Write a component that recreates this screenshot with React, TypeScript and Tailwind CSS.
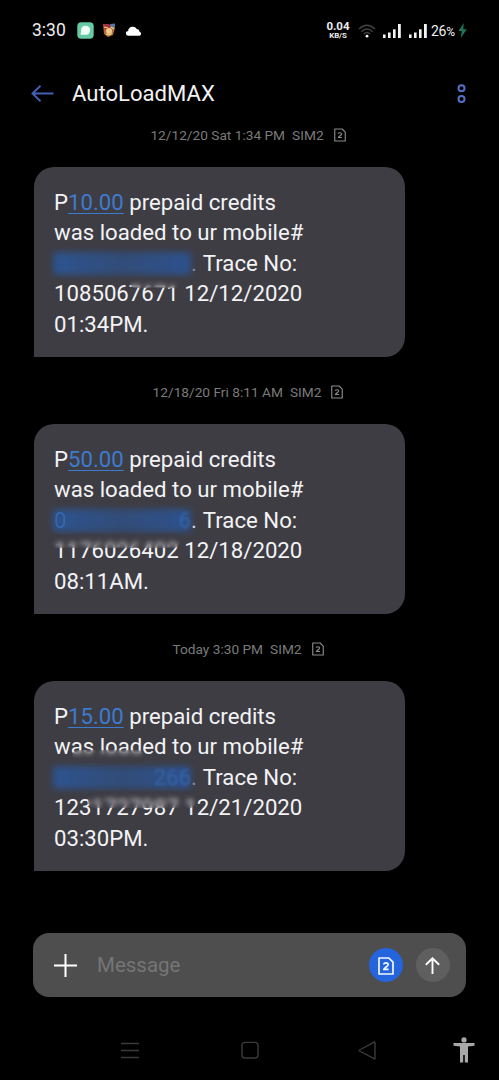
import React from "react";

type Smudge = { id: string; className: string };

type Message = {
  stamp: string;
  amount: string;
  lead: string;
  tail: string;
  dotClass: string;
  trace: string;
  date: string;
  time: string;
  smudges: Smudge[];
};

const messages: Message[] = [
  {
    stamp: "12/12/20 Sat 1:34 PM",
    amount: "10.00",
    lead: "",
    tail: "",
    dotClass: "text-[#96969c]",
    trace: "1085067671",
    date: "12/12/2020",
    time: "01:34PM.",
    smudges: [{ id: "a", className: "left-[96px] top-[111px] h-[10px] w-[50px]" }],
  },
  {
    stamp: "12/18/20 Fri 8:11 AM",
    amount: "50.00",
    lead: "0",
    tail: "6",
    dotClass: "text-[#f3f3f5]",
    trace: "1176026402",
    date: "12/18/2020",
    time: "08:11AM.",
    smudges: [{ id: "a", className: "left-[14px] top-[110px] h-[14px] w-[132px]" }],
  },
  {
    stamp: "Today 3:30 PM",
    amount: "15.00",
    lead: "",
    tail: "266",
    dotClass: "text-[#96969c]",
    trace: "1231727987",
    date: "12/21/2020",
    time: "03:30PM.",
    smudges: [
      { id: "a", className: "left-[38px] top-[69px] h-[13px] w-[72px]" },
      { id: "b", className: "left-[54px] top-[110px] h-[17px] w-[108px]" },
    ],
  },
];

function SimIcon({ className, stroke }: { className: string; stroke: number }) {
  return (
    <svg className={className} viewBox="0 0 16 18" fill="none" stroke="currentColor" strokeLinejoin="round">
      <path d="M1 1h9.8L15 5.2V17H1z" strokeWidth={stroke} />
      <path d="M5.8 7.4C5.8 5.4 10.2 5.4 10.2 7.6c0 1.5-3.2 2.8-4.4 4.8h4.8" strokeWidth={stroke} />
    </svg>
  );
}

function Signal() {
  return (
    <svg className="h-[14px] w-[18px]" viewBox="0 0 18 14" fill="#f4f4f4">
      <rect x="0" y="10.5" width="2.6" height="3.5" />
      <rect x="5" y="8.5" width="2.6" height="5.5" />
      <rect x="10" y="5.3" width="2.6" height="8.7" />
      <rect x="15" y="0" width="2.8" height="14" />
    </svg>
  );
}

function StatusBar() {
  return (
    <div className="flex h-[61px] shrink-0 items-center pl-8 pr-[32px] text-[#ededed]">
      <span className="w-[45px] pt-px text-[17.5px] leading-none">3:30</span>
      <svg className="h-[17px] w-[17px]" viewBox="0 0 17 17">
        <rect x=".3" y=".3" width="16.4" height="16.4" rx="4" fill="#64cba6" />
        <path d="M6.3 4Q7 3.6 9 3.7 13 4 13 8q0 4.6-4 4.8H4.6q-1.2 0-1-1.2Q4.2 10.5 4 8.5 4 5 6.3 4z" fill="#f1fff9" />
      </svg>
      <svg className="ml-[8px] h-[15px] w-[14px]" viewBox="0 0 14 15">
        <path d="M1 1l7 1 4-1 1 4-2 7-5 2-4-3z" fill="#a96b3d" />
        <path d="M1 1h6l2 3-6 3z" fill="#a52f3d" />
        <path d="M8 1l5-.5V4l-4 1z" fill="#5776a5" />
        <circle cx="7" cy="8" r="3" fill="#efc78c" />
        <path d="M2 4l4 1M9 4l3 2M4 11q4 2 6-1" stroke="#f0d377" strokeWidth="1.2" fill="none" />
      </svg>
      <svg className="ml-[10px] h-[10px] w-[16px]" viewBox="0 0 16 10" fill="#fff">
        <path d="M2.5 9.7a2.4 2.4 0 0 1-.4-4.8A4.7 4.7 0 0 1 10.8 3a3.1 3.1 0 0 1 2.8 2.8 2 2 0 0 1-.1 3.9z" />
      </svg>
      <div className="ml-auto flex w-[24px] flex-col items-center font-bold">
        <span className="text-[11.5px] leading-[11px]">0.04</span>
        <span className="text-[7.8px] leading-[8px]">KB/S</span>
      </div>
      <svg className="ml-[8px] h-[14px] w-[18px]" viewBox="0 0 18 14" fill="none" stroke="#424242" strokeWidth="1.5">
        <path d="M1 5Q9-2.6 17 5M3.3 7.7Q9 2.4 14.7 7.7M5.8 10Q9 7 12.2 10" />
        <circle cx="9" cy="12.2" r="1.4" fill="#fff" stroke="none" />
      </svg>
      <div className="ml-[7px] flex gap-[8px]">
        <Signal />
        <Signal />
      </div>
      <span className="ml-[4px] flex w-[25px] items-baseline text-[14px] leading-none tracking-[-0.3px]">
        26<span className="text-[12px]">%</span>
      </span>
      <svg className="ml-[2px] h-[15px] w-[9px]" viewBox="0 0 9 15" fill="#1d7458">
        <path d="M5.8 0L.4 8h3.4L2.8 15 8.8 6.2H5.3z" />
      </svg>
    </div>
  );
}

function Header() {
  return (
    <header className="flex h-[65px] shrink-0 items-center pl-[31px] pr-[33px]">
      <svg className="h-[17px] w-[23px]" viewBox="0 0 23 17" fill="none" stroke="#4261b5" strokeWidth="1.9">
        <path d="M22.5 8.5H1.5M9.5 .8L1.5 8.500l8 7.700" />
      </svg>
      <h1 className="ml-[18px] text-[22.1px] leading-none text-[#f2f2f2]">AutoLoadMAX</h1>
      <svg className="ml-auto h-[20px] w-[9px]" viewBox="0 0 9 20" fill="none" stroke="#5570c4" strokeWidth="2">
        <circle cx="4.5" cy="4.2" r="3" />
        <circle cx="4.5" cy="15" r="3" />
      </svg>
    </header>
  );
}

function Bubble({ m }: { m: Message }) {
  return (
    <div className="relative ml-[33.5px] h-[190px] w-[371.5px] rounded-[20px] rounded-bl-none bg-[#3e3d44] pl-[20.5px] pt-[20px] text-[22.2px] leading-[30.4px] whitespace-nowrap text-[#f3f3f5]">
      <p>
        P<span className="text-[#3d7bcf] underline decoration-1 underline-offset-[3px]">{m.amount}</span> prepaid credits
      </p>
      <p>was loaded to ur mobile#</p>
      <div className="flex">
        <span className="relative flex h-[30.4px] w-[137px] justify-between text-[#3970bb]">
          <span className="absolute -left-px top-[4px] h-[23px] w-[138px] rounded-sm bg-linear-to-r from-[#2d538f] via-[#314c78] to-[#2d518d] blur-[3px]" />
          <span className="relative opacity-70 blur-[0.6px]">{m.lead}</span>
          <span className="relative opacity-60 blur-[0.8px]">{m.tail}</span>
        </span>
        <span className={m.dotClass}>.</span>
        <span className="ml-[6px]">Trace No:</span>
      </div>
      <p>
        {m.trace} {m.date}
      </p>
      <p>{m.time}</p>
      {m.smudges.map((s) => (
        <span
          key={s.id}
          className={`absolute rounded-md bg-[#3e3d44]/25 backdrop-blur-[2.5px] ${s.className}`}
        />
      ))}
    </div>
  );
}

function Composer() {
  return (
    <div className="mx-[33px] mt-[36px] flex h-[64px] shrink-0 items-center rounded-[16px] bg-[#4e4e4e] pl-[20.5px] pr-[16.500px]">
      <svg className="h-[23px] w-[23px]" viewBox="0 0 23 23" stroke="#fff" strokeWidth="2">
        <path d="M11.5 0v23M0 11.5h23" />
      </svg>
      <span className="ml-[20.5px] text-[20.5px] leading-none text-[#757575]">Message</span>
      <span className="ml-auto flex h-[34px] w-[34px] items-center justify-center rounded-full bg-[#2464dc] pt-[2px] text-[#f2f8ff]">
        <SimIcon className="h-[18px] w-[16px]" stroke={1.7} />
      </span>
      <span className="ml-[13px] flex h-[34px] w-[34px] items-center justify-center rounded-full bg-[#5f5f5f] pt-px">
        <svg className="h-[17px] w-[15px]" viewBox="0 0 15 17" fill="none" stroke="#fff" strokeWidth="1.9">
          <path d="M7.5 17V1.3M.8 7.8l6.7-6.5 6.7 6.5" />
        </svg>
      </span>
    </div>
  );
}

function NavBar() {
  return (
    <nav className="mt-[23px] flex h-[60px] shrink-0 items-center pl-[121px] text-[#3b3b3b]">
      <svg className="h-[17px] w-[18px]" viewBox="0 0 18 17" stroke="currentColor" strokeWidth="1.4">
        <path d="M0 1.5h18M0 8.5h18M0 15.5h18" />
      </svg>
      <svg className="ml-[102px] h-[18px] w-[18px]" viewBox="0 0 18 18" fill="none" stroke="currentColor" strokeWidth="1.4">
        <rect x="1" y="1.4" width="16" height="15.6" rx="3" />
      </svg>
      <svg className="ml-[99px] h-[19px] w-[18px]" viewBox="0 0 18 19" fill="none" stroke="currentColor" strokeWidth="1.4" strokeLinejoin="round">
        <path d="M17 1.8v15.4q0 1-1 .5L1.6 10q-.8-.5 0-1L16 1.2q1-.4 1 .6z" />
      </svg>
      <svg className="ml-[77px] h-[26px] w-[22px]" viewBox="0 0 22 26" fill="#a8a8a8">
        <circle cx="11" cy="2.9" r="2.6" />
        <path d="M.5 5.9H21.500v2.800L15 9.600v15.900h-3.200v-7.400h-1.600v7.400H7V9.600L.5 8.700z" />
      </svg>
    </nav>
  );
}

export default function App() {
  return (
    <div className="flex h-[1080px] w-[499px] flex-col overflow-hidden bg-black font-['Roboto',sans-serif]">
      <StatusBar />
      <Header />
      <main className="h-[771px] shrink-0">
        {messages.map((m) => (
          <section key={m.trace} className="h-[257px]">
            <div className="flex h-[18px] items-center justify-center pr-[3px] text-[13.7px] text-[#7b7b7b]">
              <span>{m.stamp}</span>
              <span className="ml-[7px]">SIM2</span>
              <SimIcon className="ml-[10px] h-[14px] w-[12px] text-[#8b8b8b]" stroke={1.5} />
            </div>
            <div className="pt-[23px]">
              <Bubble m={m} />
            </div>
          </section>
        ))}
      </main>
      <Composer />
      <NavBar />
    </div>
  );
}
